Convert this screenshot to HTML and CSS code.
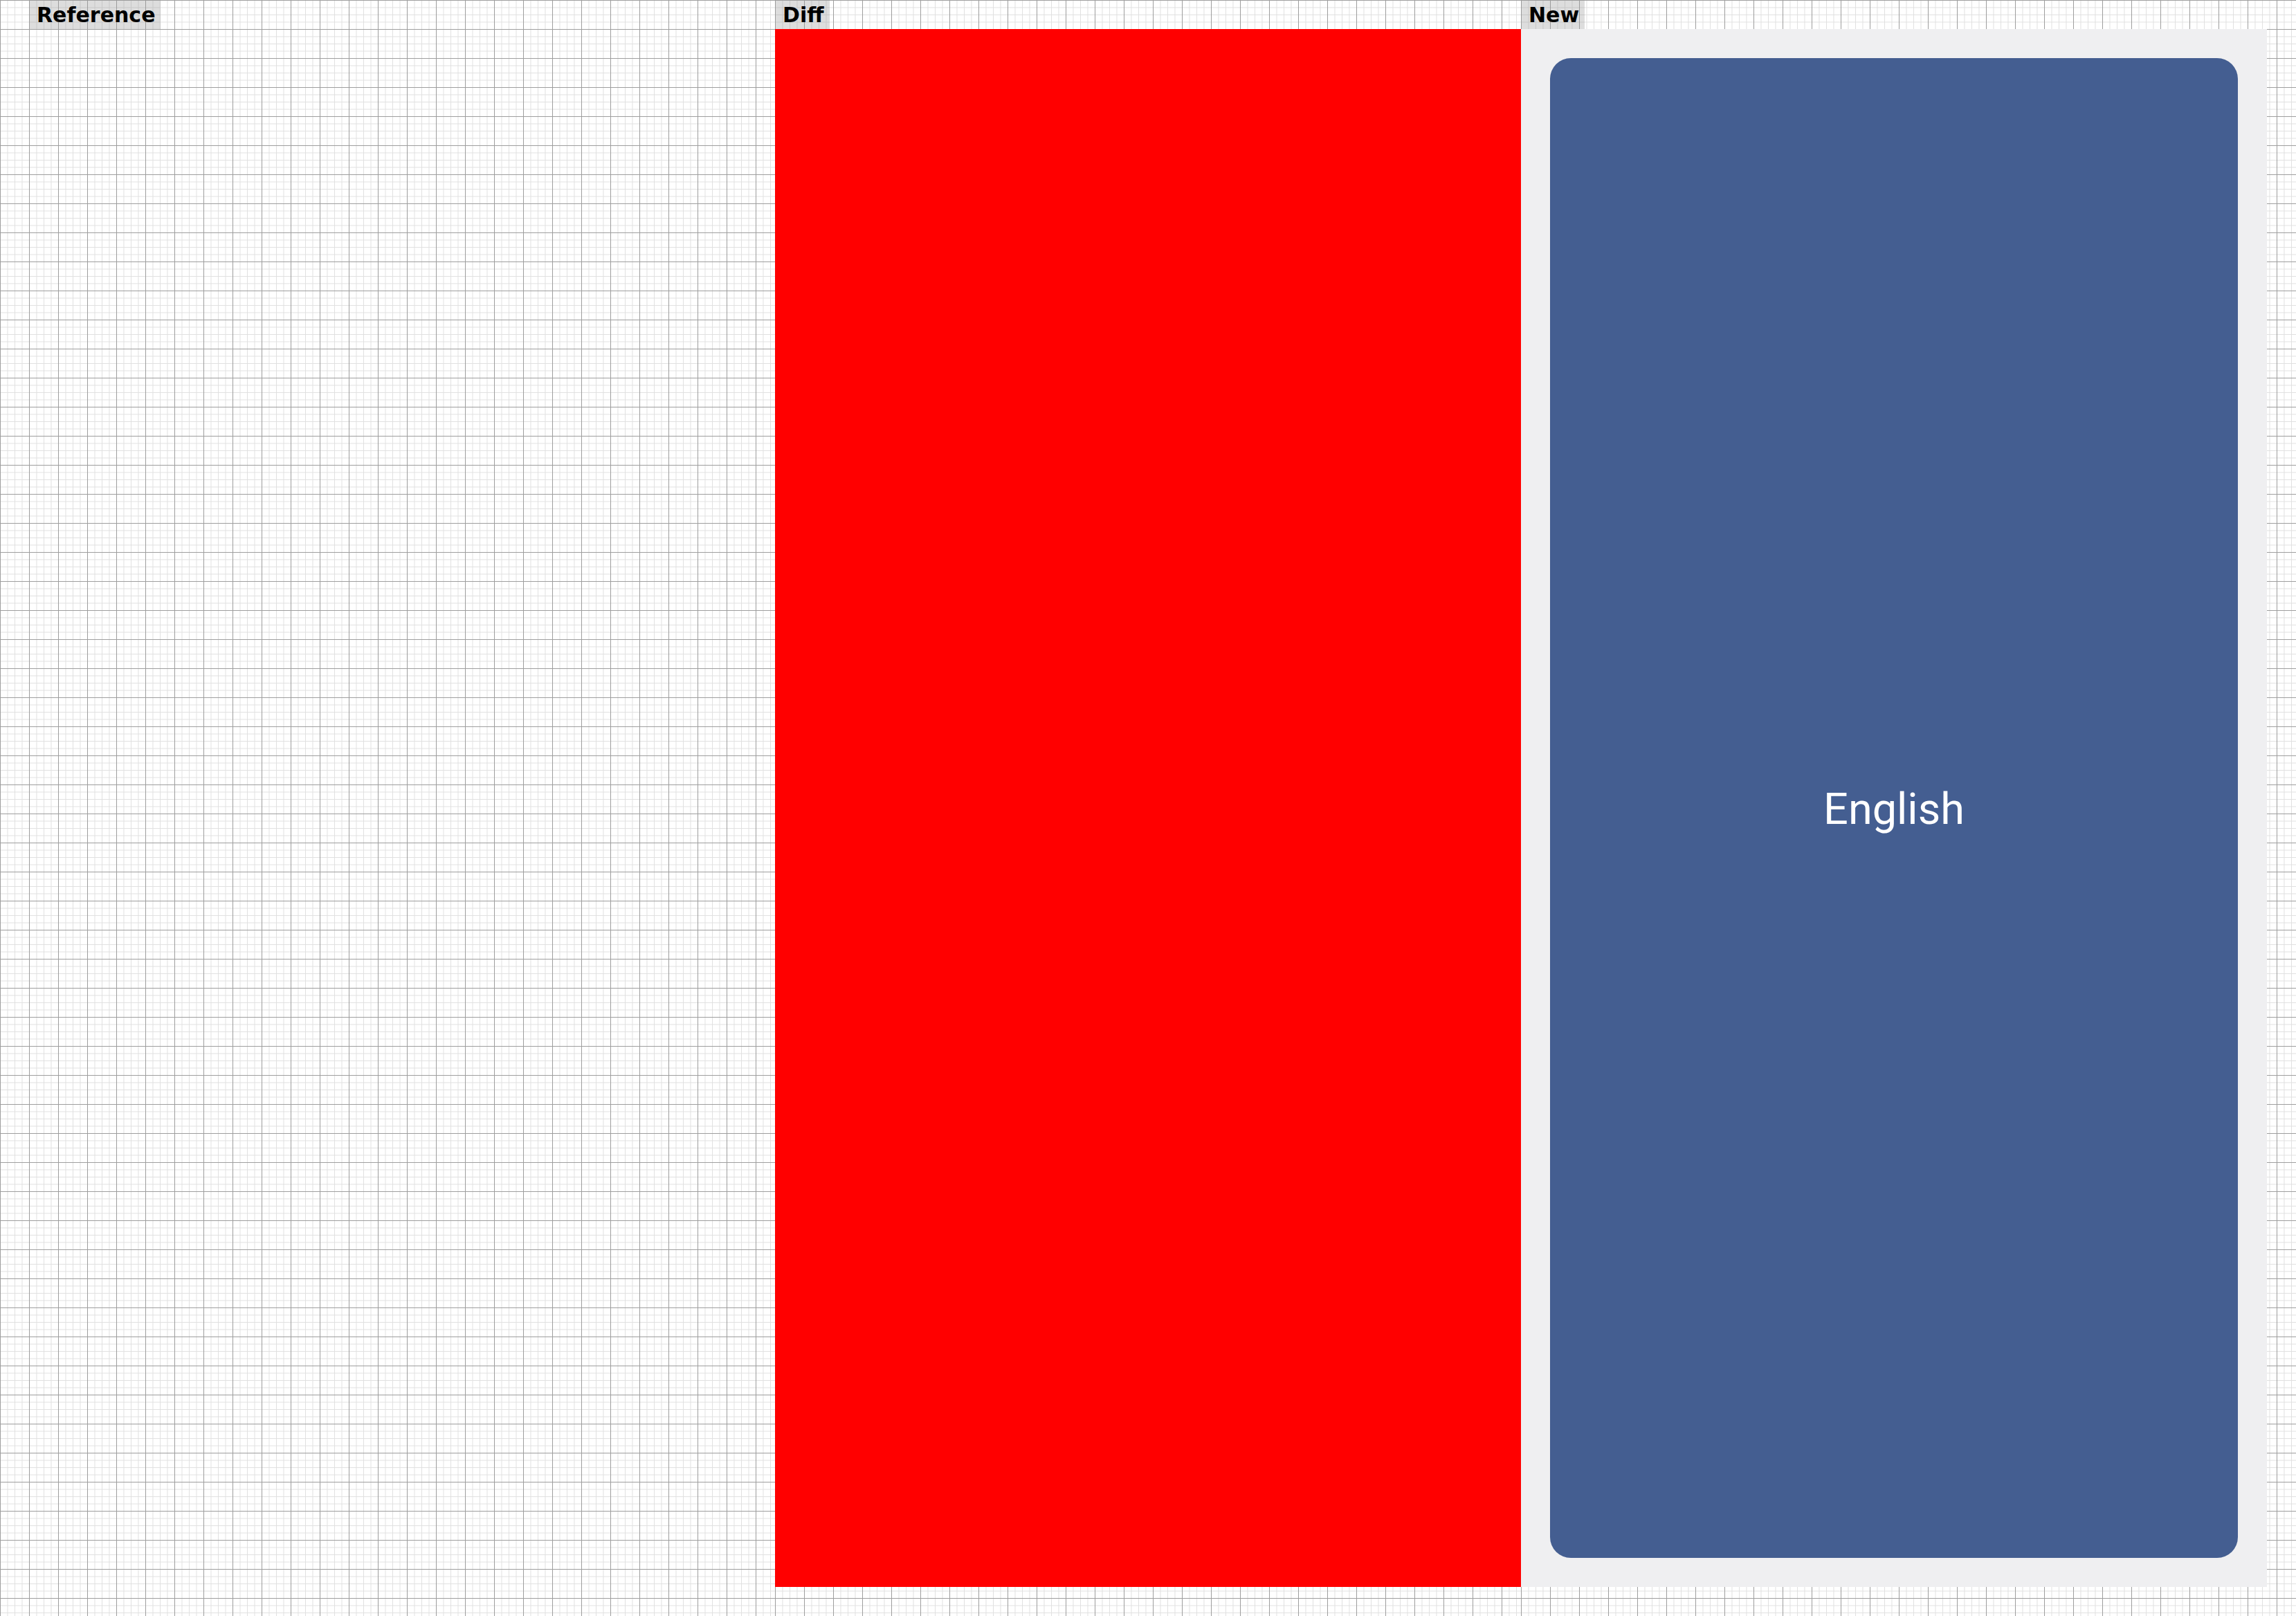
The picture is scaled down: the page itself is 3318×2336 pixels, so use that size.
FILE: index.html
```html
<!DOCTYPE html>
<html lang="en">
<head>
<meta charset="utf-8">
<title>Comparison</title>
<link rel="stylesheet" href="styles.css">
</head>
<body>
<div class="board">
  <section class="col col-first">
    <div class="label">Reference</div>
    <div class="panel panel-ref"></div>
  </section>
  <section class="col">
    <div class="label">Diff</div>
    <div class="panel panel-diff"></div>
  </section>
  <section class="col col-last">
    <div class="label">New</div>
    <div class="panel panel-new">
      <div class="card"><span class="card-text">English</span></div>
    </div>
  </section>
</div>
</body>
</html>
```
FILE: styles.css
```css
html, body {
  margin: 0;
  padding: 0;
  background: #ffffff;
}
.board {
  display: flex;
  width: 3318px;
  height: 2336px;
  overflow: hidden;
}
.col {
  display: flex;
  flex-direction: column;
  width: 1078px;
  flex: none;
  height: 2336px;
  background-color: #ffffff;
  background-image:
    linear-gradient(to right, #9e9e9e 1px, transparent 1px),
    linear-gradient(to bottom, #9e9e9e 1px, transparent 1px),
    linear-gradient(to right, #e0e0e0 1px, transparent 1px),
    linear-gradient(to bottom, #e0e0e0 1px, transparent 1px);
  background-size: 42px 42px, 42px 42px, 10.5px 10.5px, 10.5px 10.5px;
  background-position: 0 0;
}
.col-first {
  width: 1120px;
  padding-left: 42px;
  box-sizing: border-box;
}
.col-last {
  width: 1120px;
}
.label {
  align-self: flex-start;
  height: 42px;
  line-height: 44px;
  padding: 0 8px 0 11px;
  background: rgba(150, 150, 150, 0.32);
  font-family: "DejaVu Sans", sans-serif;
  font-weight: bold;
  font-size: 30px;
  color: #000000;
  box-sizing: border-box;
}
.panel {
  width: 1078px;
  height: 2252px;
  box-sizing: border-box;
}
.panel-ref {
  background: transparent;
}
.panel-diff {
  background: #ff0000;
}
.panel-new {
  background: #efeff1;
  padding: 42px;
  display: flex;
}
.card {
  flex: 1;
  background: #445e91;
  border-radius: 30px;
  display: flex;
  align-items: center;
  justify-content: center;
}
.card-text {
  font-family: Roboto, "Liberation Sans", sans-serif;
  font-size: 63px;
  color: #ffffff;
  line-height: 1;
  padding-top: 2px;
}
```
